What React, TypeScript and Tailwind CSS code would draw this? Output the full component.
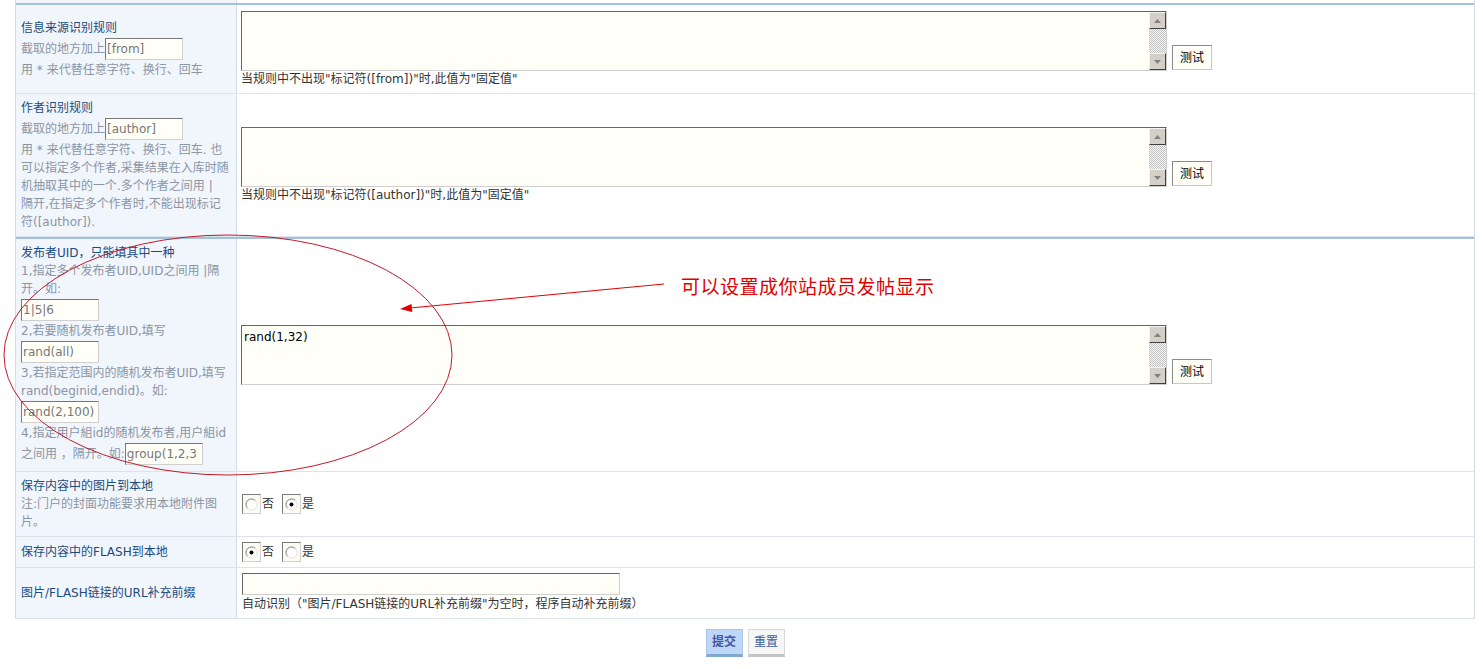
import React from 'react';

const font = "font-['DejaVu_Sans','Noto_Sans_CJK_SC',sans-serif]";

function ArrowButton({ up }: { up?: boolean }) {
  return (
    <div className="flex h-[17px] w-[17px] items-center justify-center border border-t-[#f2f2f2] border-l-[#f2f2f2] border-r-[#404040] border-b-[#404040] bg-[#d4d0c8]">
      <svg width="7" height="4" viewBox="0 0 7 4">
        <path d={up ? 'M0 4L3.5 0L7 4Z' : 'M0 0L3.5 4L7 0Z'} fill="#808080" />
      </svg>
    </div>
  );
}

function RuleField({ value, note }: { value?: string; note?: string }) {
  return (
    <div className="flex flex-col">
      <div className="flex items-end gap-[5px]">
        <div className="flex h-[60px] w-[926px] border border-t-[#666] border-l-[#666] border-r-[#cfcfcf] border-b-[#cfcfcf] bg-[#fffff7]">
          <textarea
            readOnly
            defaultValue={value}
            className="h-full flex-1 resize-none overflow-hidden bg-transparent px-[2px] py-[3px] text-[12px] leading-[16px] text-black outline-none"
          />
          <div className="flex w-[17px] flex-col justify-between bg-[image:repeating-conic-gradient(#c4c4c4_0%_25%,#f4f4f4_0%_50%)] bg-[length:2px_2px]">
            <ArrowButton up />
            <ArrowButton />
          </div>
        </div>
        <button className="mb-[1px] h-[25px] w-[40px] border border-t-[#8a8a8a] border-l-[#8a8a8a] border-r-[#c8c8c8] border-b-[#c8c8c8] bg-[#fffff7] text-[12px] text-black">
          测试
        </button>
      </div>
      {note && <div className="whitespace-nowrap text-[12px] leading-[16px] text-[#333]">{note}</div>}
    </div>
  );
}

function Title({ children }: { children: React.ReactNode }) {
  return <div className="whitespace-nowrap text-[12px] leading-[18px] text-[#1c4b80]">{children}</div>;
}

function Line({ children }: { children?: React.ReactNode }) {
  return <div className="whitespace-pre text-[12px] leading-[18px] text-[#8b95a3]">{children}</div>;
}

function InputLine({ children }: { children: React.ReactNode }) {
  return <div className="flex h-[24px] items-center whitespace-pre text-[12px] text-[#8b95a3]">{children}</div>;
}

function Box({ value }: { value: string }) {
  return (
    <input
      readOnly
      value={value}
      className="h-[22px] w-[78px] border border-t-[#777] border-l-[#777] border-r-[#d0d0d0] border-b-[#d0d0d0] bg-[#fffff7] px-[1px] text-[12px] text-[#777] outline-none"
    />
  );
}

function Radio({ checked, label }: { checked?: boolean; label: string }) {
  return (
    <span className="mr-[8px] inline-flex items-center text-[12px] text-[#333]">
      <span className="relative inline-block h-[20px] w-[19px] border border-t-[#7a7a7a] border-l-[#7a7a7a] border-r-[#d0d0d0] border-b-[#d0d0d0] bg-[#fbfbf4]">
        <svg className="absolute left-[2px] top-[3px]" width="13" height="13" viewBox="0 0 13 13">
          <circle cx="6.5" cy="6.5" r="5.5" fill="#fff" />
          <path d="M2.61 10.39A5.5 5.5 0 0 1 10.39 2.61" fill="none" stroke="#7a7a7a" />
          <path d="M10.39 2.61A5.5 5.5 0 0 1 2.61 10.39" fill="none" stroke="#e4e4e4" />
          {checked && <circle cx="6.5" cy="6.5" r="2" fill="#000" />}
        </svg>
      </span>
      <span className="ml-[1px]">{label}</span>
    </span>
  );
}

function Row({
  left,
  right,
  heavy,
  minH = '',
}: {
  left: React.ReactNode;
  right: React.ReactNode;
  heavy?: boolean;
  minH?: string;
}) {
  return (
    <div
      className={`grid grid-cols-[221px_1fr] border-b border-[#dbe4ee] ${
        heavy ? 'border-t-2 border-t-[#a5c1d9]' : ''
      } ${minH}`}
    >
      <div className="flex flex-col justify-center border-r border-[#d3deea] bg-[#f1f6fd] px-[5px] py-[5px]">{left}</div>
      <div className="flex flex-col justify-center px-[4px] py-[5px]">{right}</div>
    </div>
  );
}

export default function App() {
  return (
    <div className={`relative h-[669px] w-[1483px] overflow-hidden bg-white ${font}`}>
      <div className="ml-[15px] w-[1460px] border-x border-[#d3deea]">
        <div className="grid h-[3px] grid-cols-[221px_1fr]">
          <div className="border-r border-[#d3deea] bg-[#f1f6fd]" />
          <div />
        </div>

        {/* 信息来源 */}
        <Row
          heavy
          minH="min-h-[91px]"
          left={
            <>
              <Title>信息来源识别规则</Title>
              <InputLine>
                截取的地方加上<Box value="[from]" />
              </InputLine>
              <Line>用 * 来代替任意字符、换行、回车</Line>
            </>
          }
          right={<RuleField note={'当规则中不出现"标记符([from])"时,此值为"固定值"'} />}
        />

        {/* 作者 */}
        <Row
          left={
            <>
              <Title>作者识别规则</Title>
              <InputLine>
                截取的地方加上<Box value="[author]" />
              </InputLine>
              <Line>用 * 来代替任意字符、换行、回车. 也</Line>
              <Line>可以指定多个作者,采集结果在入库时随</Line>
              <Line>机抽取其中的一个.多个作者之间用 |</Line>
              <Line>隔开,在指定多个作者时,不能出现标记</Line>
              <Line>符([author]).</Line>
            </>
          }
          right={<RuleField note={'当规则中不出现"标记符([author])"时,此值为"固定值"'} />}
        />

        {/* 发布者UID */}
        <Row
          heavy
          left={
            <>
              <Title>发布者UID，只能填其中一种</Title>
              <Line>1,指定多个发布者UID,UID之间用 |隔</Line>
              <Line>开。如:</Line>
              <InputLine>
                <Box value="1|5|6" />
              </InputLine>
              <Line>2,若要随机发布者UID,填写</Line>
              <InputLine>
                <Box value="rand(all)" />
              </InputLine>
              <Line>3,若指定范围内的随机发布者UID,填写</Line>
              <Line>rand(beginid,endid)。如:</Line>
              <InputLine>
                <Box value="rand(2,100)" />
              </InputLine>
              <Line>4,指定用户組id的随机发布者,用户組id</Line>
              <InputLine>
                之间用 ，隔开。如:<Box value="group(1,2,3" />
              </InputLine>
            </>
          }
          right={<RuleField value="rand(1,32)" />}
        />

        {/* 图片本地化 */}
        <Row
          left={
            <>
              <Title>保存内容中的图片到本地</Title>
              <Line>注:门户的封面功能要求用本地附件图</Line>
              <Line>片。</Line>
            </>
          }
          right={
            <div className="ml-[1px] flex items-center">
              <Radio label="否" />
              <Radio checked label="是" />
            </div>
          }
        />

        {/* FLASH本地化 */}
        <Row
          minH="min-h-[31px]"
          left={<Title>保存内容中的FLASH到本地</Title>}
          right={
            <div className="ml-[1px] flex items-center">
              <Radio checked label="否" />
              <Radio label="是" />
            </div>
          }
        />

        {/* URL前缀 */}
        <Row
          minH="min-h-[51px]"
          left={<Title>图片/FLASH链接的URL补充前缀</Title>}
          right={
            <div className="ml-[1px] flex flex-col">
              <input
                readOnly
                value=""
                className="h-[22px] w-[378px] border border-t-[#666] border-l-[#666] border-r-[#cfcfcf] border-b-[#cfcfcf] bg-[#fffff7] outline-none"
              />
              <div className="whitespace-nowrap text-[12px] leading-[18px] text-[#333]">
                自动识别（"图片/FLASH链接的URL补充前缀"为空时，程序自动补充前缀）
              </div>
            </div>
          }
        />
      </div>

      <div className="ml-[15px] flex w-[1460px] justify-center gap-[5px] pt-[10px]">
        <button className="h-[28px] w-[37px] border border-[#a9c6e6] border-b-[3px] border-b-[#7fa9cd] bg-[#bed6f8] text-[12px] font-bold text-[#45559f]">
          提交
        </button>
        <button className="h-[28px] w-[37px] border border-[#d8d8d8] border-b-[3px] border-b-[#c4c4c4] bg-[#f6f6f6] text-[12px] text-[#3c5a9c]">
          重置
        </button>
      </div>

      {/* annotation overlay */}
      <svg className="pointer-events-none absolute left-0 top-0" width="1483" height="669">
        <ellipse cx="228" cy="355" rx="224" ry="120" fill="none" stroke="#c21a2a" strokeWidth="1" />
        <line x1="664" y1="284" x2="410" y2="308" stroke="#e00000" strokeWidth="1" />
        <polygon points="400,309 411.5,303.9 412.3,311.9" fill="#e00000" />
      </svg>
      <div className="pointer-events-none absolute left-[681px] top-[276px] whitespace-nowrap font-['Noto_Sans_CJK_SC',sans-serif] text-[19px] leading-[20px] tracking-[0.5px] text-[#e00000]">
        可以设置成你站成员发帖显示
      </div>
    </div>
  );
}
